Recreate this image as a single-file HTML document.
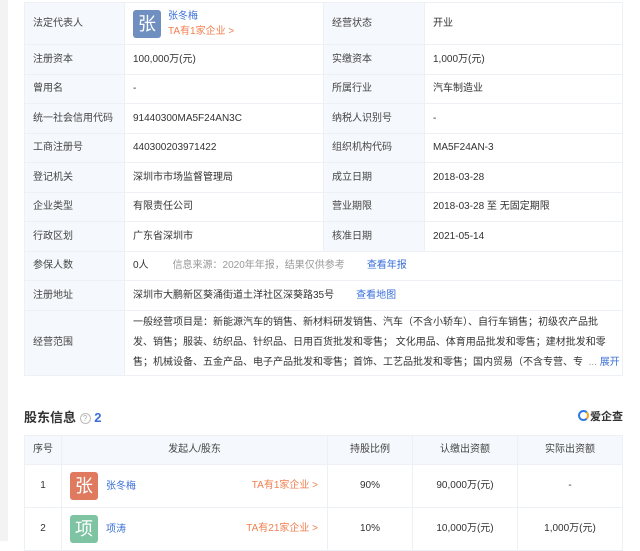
<!DOCTYPE html><html><head><meta charset="utf-8"><style>
*{margin:0;padding:0;box-sizing:border-box}
body{width:640px;height:541px;overflow:hidden;background:#fff;font-family:"Liberation Sans","Noto Sans CJK SC",sans-serif;font-size:10px;line-height:14px;color:#333;position:relative}
.strip{position:absolute;left:0;top:0;width:8px;height:541px;background:#f3f3f3}
table{border-collapse:collapse;position:absolute;left:24px;table-layout:fixed}
td,th{border:1px solid #edf1f6;font-weight:normal;vertical-align:middle;line-height:14px}
.t1 td{padding:0 0 0 8px}
.t1 td.l{background:#f5f8fc;color:#444}
a{color:#3a6fd8;text-decoration:none}
.o{color:#f07f4f}
.g{color:#999}
.av{display:inline-block;width:28px;height:28px;border-radius:3px;color:#fff;font-size:18px;line-height:28px;text-align:center;vertical-align:middle}
.t2 th{background:#f5f8fc;height:29px;text-align:center;color:#444}
.t2 td{height:43px;text-align:center}
</style></head><body>
<div class="strip"></div>
<table class="t1" style="top:2px;width:598px">
<colgroup><col style="width:100px"><col style="width:199px"><col style="width:101px"><col style="width:198px"></colgroup>
<tr style="height:42px"><td class="l">法定代表人</td><td><span class="av" style="background:#6e8fbf">张</span><span style="display:inline-block;vertical-align:middle;margin-left:7px;line-height:15px"><a>张冬梅</a><br><span class="o">TA有1家企业 &gt;</span></span></td><td class="l">经营状态</td><td>开业</td></tr>
<tr style="height:30px"><td class="l">注册资本</td><td>100,000万(元)</td><td class="l">实缴资本</td><td>1,000万(元)</td></tr>
<tr style="height:29px"><td class="l">曾用名</td><td>-</td><td class="l">所属行业</td><td>汽车制造业</td></tr>
<tr style="height:30px"><td class="l">统一社会信用代码</td><td>91440300MA5F24AN3C</td><td class="l">纳税人识别号</td><td>-</td></tr>
<tr style="height:29px"><td class="l">工商注册号</td><td>440300203971422</td><td class="l">组织机构代码</td><td>MA5F24AN-3</td></tr>
<tr style="height:30px"><td class="l">登记机关</td><td>深圳市市场监督管理局</td><td class="l">成立日期</td><td>2018-03-28</td></tr>
<tr style="height:29px"><td class="l">企业类型</td><td>有限责任公司</td><td class="l">营业期限</td><td>2018-03-28 至 无固定期限</td></tr>
<tr style="height:30px"><td class="l">行政区划</td><td>广东省深圳市</td><td class="l">核准日期</td><td>2021-05-14</td></tr>
<tr style="height:29px"><td class="l">参保人数</td><td colspan="3">0人<span class="g" style="margin-left:24px">信息来源：2020年年报，结果仅供参考</span><a style="margin-left:22px">查看年报</a></td></tr>
<tr style="height:30px"><td class="l">注册地址</td><td colspan="3">深圳市大鹏新区葵涌街道土洋社区深葵路35号<a style="margin-left:22px">查看地图</a></td></tr>
<tr style="height:65px"><td class="l">经营范围</td><td colspan="3" style="line-height:20px;padding-right:4px;white-space:nowrap;overflow:hidden">一般经营项目是：新能源汽车的销售、新材料研发销售、汽车（不含小轿车）、自行车销售；初级农产品批<br>发、销售；服装、纺织品、针织品、日用百货批发和零售； 文化用品、体育用品批发和零售；建材批发和零<br>售；机械设备、五金产品、电子产品批发和零售；首饰、工艺品批发和零售；国内贸易（不含专营、专 &nbsp;<span class="g">...</span> <a>展开</a></td></tr>
</table>
<div style="position:absolute;left:24px;top:409px;font-size:13px;line-height:18px;font-weight:bold;color:#333">股东信息 <span style="display:inline-block;width:11px;height:11px;border:1px solid #bbb;border-radius:50%;font-size:8px;line-height:9px;text-align:center;color:#aaa;font-weight:normal;vertical-align:1px">?</span> <span style="color:#3a6fd8">2</span></div>
<div style="position:absolute;left:578px;top:409px;font-size:11px;line-height:16px;font-weight:bold;color:#333"><span style="display:inline-block;width:11px;height:11px;border:2px solid #2d7be5;border-right-color:#f5a623;border-radius:50%;vertical-align:-1px;margin-right:1px"></span>爱企查</div>
<table class="t2" style="top:435px;width:598px">
<colgroup><col style="width:37px"><col style="width:266px"><col style="width:85px"><col style="width:105px"><col style="width:105px"></colgroup>
<tr><th>序号</th><th>发起人/股东</th><th>持股比例</th><th>认缴出资额</th><th>实际出资额</th></tr>
<tr><td>1</td><td style="text-align:left;padding-left:8px"><span class="av" style="background:#e07a5f">张</span><a style="margin-left:8px">张冬梅</a><span class="o" style="float:right;margin-right:9px;line-height:28px">TA有1家企业 &gt;</span></td><td>90%</td><td>90,000万(元)</td><td>-</td></tr>
<tr><td>2</td><td style="text-align:left;padding-left:8px"><span class="av" style="background:#7ec4a3">项</span><a style="margin-left:8px">项涛</a><span class="o" style="float:right;margin-right:9px;line-height:28px">TA有21家企业 &gt;</span></td><td>10%</td><td>10,000万(元)</td><td>1,000万(元)</td></tr>
</table>
</body></html>
